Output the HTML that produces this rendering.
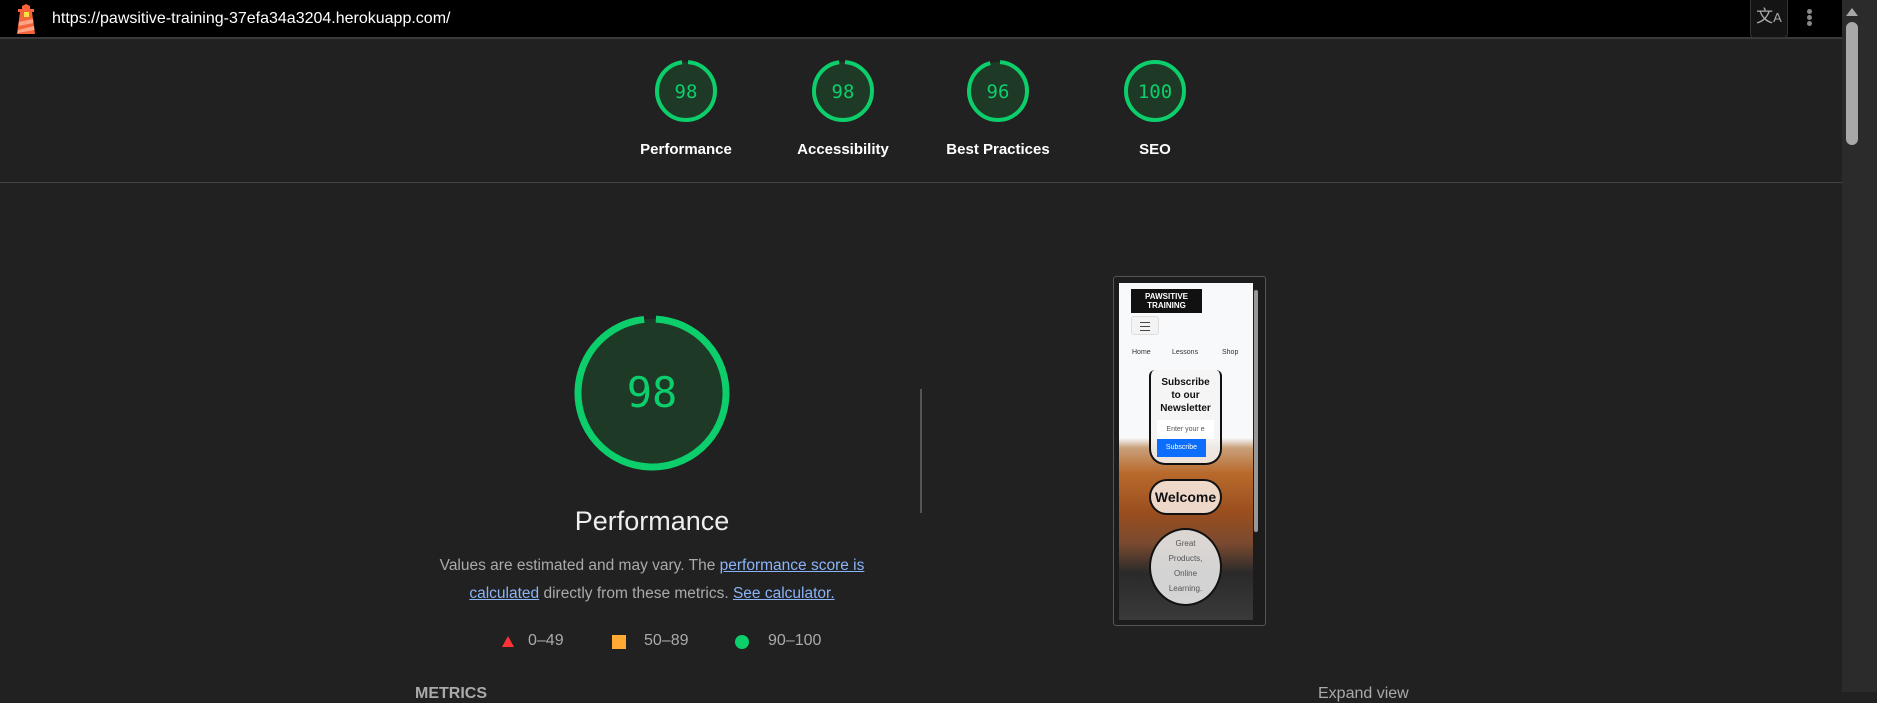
<!DOCTYPE html>
<html><head><meta charset="utf-8"><style>
*{margin:0;padding:0;box-sizing:border-box}
body{width:1877px;height:692px;overflow:hidden;background:#212121;font-family:"Liberation Sans",sans-serif;position:relative}
.a{position:absolute}
.lbl{color:#fff;font-weight:bold;font-size:15px;text-align:center;width:160px}
</style></head><body>
<div class="a" style="left:0;top:0;width:1842px;height:39px;background:#000;border-bottom:2px solid #3a3a3a"></div>
<svg class="a" style="left:14px;top:4px" width="24" height="30" viewBox="0 0 24 30">
<path d="M8 2 L12 0 L16 2 L16 5 L20 5 L20 8 L18 8 L21 30 L3 30 L6 8 L4 8 L4 5 L8 5Z" fill="#f4633a"/>
<rect x="10" y="8" width="5" height="5" fill="#fde047"/>
<path d="M5 18 L19 15 L19.5 19 L4.5 22Z M4 26 L20 22 L20.5 26 L3.5 29Z" fill="#ffa385"/>
</svg>
<div class="a" style="left:52px;top:10px;color:#fff;font-size:16px">https://pawsitive-training-37efa34a3204.herokuapp.com/</div>
<div class="a" style="left:1750px;top:0;width:38px;height:38px;background:#141414;border:1px solid #333;border-top:none;border-radius:0 0 4px 4px;color:#aaa;font-size:17px;text-align:center;line-height:34px">文<span style="font-size:13px">A</span></div>
<div class="a" style="left:1807px;top:9px;width:5px;height:5px;border-radius:50%;background:#888;box-shadow:0 6px 0 #888,0 12px 0 #888"></div>
<div class="a" style="left:1842px;top:0;width:35px;height:692px;background:#2b2b2b"></div>
<div class="a" style="left:1846px;top:22px;width:12px;height:123px;background:#a8a8a8;border-radius:6px"></div>
<div class="a" style="left:1846px;top:8px;width:0;height:0;border-left:6px solid transparent;border-right:6px solid transparent;border-bottom:8px solid #a8a8a8"></div>
<div class="a" style="left:0;top:182px;width:1842px;height:1px;background:#444"></div>

<svg class="a" style="left:0;top:0" width="1842" height="692">
<g fill="#1e3a27"><circle cx="686" cy="91" r="29"/><circle cx="843" cy="91" r="29"/><circle cx="998" cy="91" r="29"/><circle cx="1155" cy="91" r="29"/><circle cx="652" cy="393" r="74"/></g>
<g fill="none" stroke="#0cce6b" stroke-width="4">
<circle cx="686" cy="91" r="29" stroke-dasharray="176 200" transform="rotate(-86 686 91)"/>
<circle cx="843" cy="91" r="29" stroke-dasharray="176 200" transform="rotate(-86 843 91)"/>
<circle cx="998" cy="91" r="29" stroke-dasharray="172 200" transform="rotate(-86 998 91)"/>
<circle cx="1155" cy="91" r="29"/>
<circle cx="652" cy="393" r="74" stroke-width="7" stroke-dasharray="453 500" transform="rotate(-87 652 393)"/>
</g>
<g fill="#0cce6b" font-family="DejaVu Sans Mono, Liberation Mono, monospace" text-anchor="middle">
<text x="686" y="98" font-size="19">98</text><text x="843" y="98" font-size="19">98</text><text x="998" y="98" font-size="19">96</text><text x="1155" y="98" font-size="19">100</text>
<text x="652" y="407" font-size="42">98</text>
</g>
<path d="M502 647 L508 636 L514 647Z" fill="#ff3333"/>
<rect x="612" y="635" width="14" height="14" fill="#ffaa33"/>
<circle cx="742" cy="642" r="7" fill="#0cce6b"/>
<rect x="920" y="389" width="2" height="124" fill="#555"/>
</svg>
<div class="a lbl" style="left:606px;top:141px">Performance</div>
<div class="a lbl" style="left:763px;top:141px">Accessibility</div>
<div class="a lbl" style="left:918px;top:141px">Best Practices</div>
<div class="a lbl" style="left:1075px;top:141px">SEO</div>
<div class="a" style="left:452px;top:506px;width:400px;text-align:center;color:#eee;font-size:27px">Performance</div>
<div class="a" style="left:427px;top:552px;width:450px;text-align:center;color:#aaa;font-size:15.5px;line-height:28px">Values are estimated and may vary. The <u style="color:#8ab4f8">performance score is calculated</u> directly from these metrics. <u style="color:#8ab4f8">See calculator.</u></div>
<div class="a" style="left:528px;top:632px;color:#aaa;font-size:16px">0–49</div>
<div class="a" style="left:644px;top:632px;color:#aaa;font-size:16px">50–89</div>
<div class="a" style="left:768px;top:632px;color:#aaa;font-size:16px">90–100</div>
<div class="a" style="left:415px;top:685px;color:#aaa;font-size:16px;font-weight:bold">METRICS</div>
<div class="a" style="left:1318px;top:685px;color:#aaa;font-size:16px">Expand view</div>

<div class="a" style="left:1113px;top:276px;width:153px;height:350px;border:1px solid #555;border-radius:3px;background:#1c1c1c"></div>
<div class="a" style="left:1119px;top:283px;width:134px;height:337px;overflow:hidden;background:linear-gradient(#f7f9fb 0,#f7f9fb 155px,#c9a07a 165px,#b86a2c 190px,#9a4e1e 230px,#7a4a30 260px,#2a2a2a 290px,#3a3a3a 337px)">
 <div class="a" style="left:12px;top:6px;width:71px;height:24px;background:#111;color:#fff;font-size:8px;font-weight:bold;text-align:center;line-height:9px;padding-top:3px">PAWSITIVE<br>TRAINING</div>
 <div class="a" style="left:12px;top:33px;width:28px;height:19px;border:1px solid #ddd;border-radius:3px;background:#f3f3f3"><div style="margin:5px 8px;height:1px;background:#444;box-shadow:0 4px 0 #444,0 8px 0 #444"></div></div>
 <div class="a" style="left:13px;top:66px;font-size:7px;color:#333">Home</div>
 <div class="a" style="left:53px;top:66px;font-size:7px;color:#333">Lessons</div>
 <div class="a" style="left:103px;top:66px;font-size:7px;color:#333">Shop</div>
 <div class="a" style="left:30px;top:87px;width:73px;height:95px;border:2px solid #111;border-top:none;border-radius:6px 6px 16px 16px;background:rgba(245,245,245,.85);text-align:center;font-size:10px;font-weight:bold;line-height:13px;color:#111;padding-top:6px">Subscribe<br>to our<br>Newsletter
  <div style="margin:5px 6px 0;height:19px;background:#fff;font-size:7px;font-weight:normal;line-height:19px;color:#555">Enter your e</div>
  <div style="margin:0 14px 0 6px;height:18px;background:#0d6efd;color:#fff;font-size:7px;font-weight:normal;line-height:18px">Subscribe</div></div>
 <div class="a" style="left:30px;top:196px;width:73px;height:36px;border:2px solid #111;border-radius:18px;background:rgba(245,230,220,.9);text-align:center;font-size:14px;font-weight:bold;line-height:32px;color:#111">Welcome</div>
 <div class="a" style="left:30px;top:245px;width:73px;height:78px;border:2px solid #111;border-radius:50%;background:rgba(230,230,230,.9);text-align:center;font-size:8px;line-height:15px;color:#555;padding-top:6px">Great<br>Products,<br>Online<br>Learning.</div>
</div>
<div class="a" style="left:1254px;top:290px;width:4px;height:242px;background:#999;border-radius:2px"></div>
</body></html>
